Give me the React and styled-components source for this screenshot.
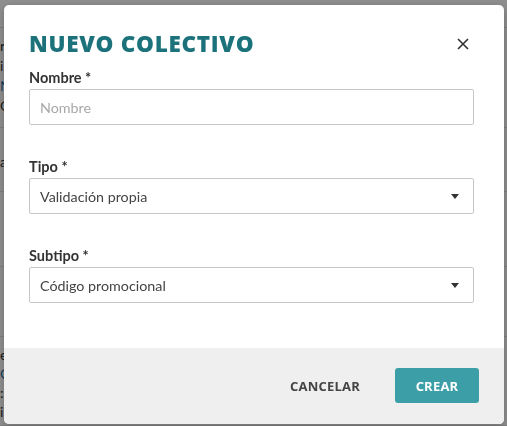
import React from "react";
import styled, { createGlobalStyle } from "styled-components";

const Global = createGlobalStyle`
  html, body { margin: 0; padding: 0; background: #fff; }
  body { font-family: Lato, "Noto Sans", sans-serif; overflow: hidden; }
  * { box-sizing: border-box; }
`;

const Page = styled.div`
  width: 507px;
  height: 426px;
  background: #fff;
  display: flex;
  flex-direction: column;
`;

const Row = styled.div`
  height: ${(p) => p.$h}px;
  border-bottom: 1px solid #e2e2e2;
  padding-top: ${(p) => p.$pt || 0}px;
  display: flex;
  flex-direction: column;
  font-size: 14px;
  line-height: ${(p) => p.$lh || 20}px;
  color: #333;
`;

const Frag = styled.span`
  color: ${(p) => (p.$blue ? "#2a6fa8" : "#333")};
`;

const Overlay = styled.div`
  position: fixed;
  inset: 0;
  background: rgba(0, 0, 0, 0.44);
  display: flex;
  align-items: flex-start;
  padding: 5px 0 0 4px;
`;

const Modal = styled.div`
  width: 500px;
  height: 419px;
  background: #fff;
  border-radius: 5px;
  overflow: hidden;
  display: flex;
  flex-direction: column;
  box-shadow: 0 2px 8px rgba(0, 0, 0, 0.25);
`;

const Header = styled.div`
  display: flex;
  align-items: center;
  justify-content: space-between;
  padding: 24px 35px 0 25px;
`;

const Title = styled.h2`
  margin: 0;
  font-family: "Open Sans", sans-serif;
  font-weight: 800;
  font-size: 22.5px;
  line-height: 30px;
  letter-spacing: 0.7px;
  color: #1b727a;
`;

const Close = styled.button`
  border: 0;
  background: none;
  padding: 0;
  width: 12px;
  height: 12px;
  display: flex;
  cursor: pointer;
`;

const Body = styled.div`
  flex: 1;
  padding: 10px 30px 0 25px;
`;

const Field = styled.div`
  display: flex;
  flex-direction: column;
  gap: 2px;
  margin-bottom: 33px;
`;

const Label = styled.label`
  font-family: Lato, "Noto Sans", sans-serif;
  font-weight: 700;
  font-size: 14.5px;
  line-height: 18px;
  color: #333;
`;

const Box = styled.div`
  height: 36px;
  border: 1px solid #c6c6c6;
  border-radius: 2px;
  display: flex;
  align-items: center;
  justify-content: space-between;
  padding: 0 14px 0 10px;
  font-family: Lato, "Noto Sans", sans-serif;
  font-size: 14.3px;
  color: ${(p) => (p.$placeholder ? "#a8a8a8" : "#444")};
`;

const Caret = styled.span`
  width: 0;
  height: 0;
  border-left: 4.5px solid transparent;
  border-right: 4.5px solid transparent;
  border-top: 5px solid #333;
`;

const Footer = styled.div`
  height: 76px;
  background: #efefef;
  display: flex;
  align-items: center;
  justify-content: flex-end;
  padding: 0 25px 1px 0;
  gap: 19px;
`;

const TextButton = styled.button`
  border: 0;
  background: none;
  font-family: "Open Sans", sans-serif;
  font-weight: 700;
  font-size: 13px;
  letter-spacing: 0.2px;
  color: #444;
  padding: 0 16px;
  height: 35px;
`;

const PrimaryButton = styled.button`
  border: 0;
  background: #3c9fa7;
  border-radius: 3px;
  width: 84px;
  height: 35px;
  font-family: "Open Sans", sans-serif;
  font-weight: 700;
  font-size: 13px;
  letter-spacing: 0.2px;
  color: #fff;
`;

function SelectField({ label, value }) {
  return (
    <Field>
      <Label>{label}</Label>
      <Box>
        <span>{value}</span>
        <Caret />
      </Box>
    </Field>
  );
}

export default function App() {
  return (
    <>
      <Global />
      <Page>
        <Row $h={28} />
        <Row $h={100} $pt={8}>
          <Frag>r</Frag>
          <Frag>i</Frag>
          <Frag $blue>N</Frag>
          <Frag>O</Frag>
        </Row>
        <Row $h={64} $pt={24}>
          <Frag>a</Frag>
        </Row>
        <Row $h={75} />
        <Row $h={70} />
        <Row $h={89} $pt={8} $lh={19}>
          <Frag>e</Frag>
          <Frag $blue>C</Frag>
          <Frag>:</Frag>
          <Frag>i</Frag>
        </Row>
      </Page>
      <Overlay>
        <Modal>
          <Header>
            <Title>NUEVO COLECTIVO</Title>
            <Close aria-label="Cerrar">
              <svg width="12" height="12" viewBox="0 0 12 12">
                <path d="M1 1 L11 11 M11 1 L1 11" stroke="#333" strokeWidth="1.6" fill="none" />
              </svg>
            </Close>
          </Header>
          <Body>
            <Field>
              <Label>Nombre *</Label>
              <Box $placeholder>Nombre</Box>
            </Field>
            <SelectField label="Tipo *" value="Validación propia" />
            <SelectField label="Subtipo *" value="Código promocional" />
          </Body>
          <Footer>
            <TextButton>CANCELAR</TextButton>
            <PrimaryButton>CREAR</PrimaryButton>
          </Footer>
        </Modal>
      </Overlay>
    </>
  );
}
